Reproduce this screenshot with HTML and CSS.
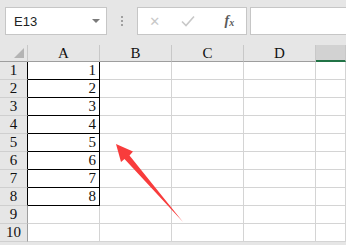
FILE: index.html
```html
<!DOCTYPE html>
<html lang="en">
<head>
    <meta charset="UTF-8">
    <title>Sheet</title>
    <link rel="stylesheet" href="styles.css">
</head>
<body>
    <div class="toolbar">
        <div class="name-box">
            <span>E13</span>
            <span class="caret"></span>
        </div>
        <div class="grip"><i></i><i></i><i></i></div>
        <div class="fx-buttons">
            <span class="btn cancel">&#x2715;</span>
            <span class="btn ok">
                <svg width="14" height="12" viewBox="0 0 14 12"><path d="M1 6.5 L5 10.5 L13 1.5" fill="none" stroke="#c8c8c8" stroke-width="1.6"/></svg>
            </span>
            <span class="btn fx">f<sub>x</sub></span>
        </div>
        <div class="formula"></div>
    </div>

    <div class="sheet">
        <table class="grid">
            <colgroup>
                <col class="c-head">
                <col class="c-col"><col class="c-col"><col class="c-col"><col class="c-col">
                <col class="c-last">
            </colgroup>
            <tr class="col-heads">
                <th class="corner"><span class="tri"></span></th>
                <th>A</th><th>B</th><th>C</th><th>D</th><th class="sel"></th>
            </tr>
            <tr><th class="rh boxed">1</th><td class="box">1</td><td></td><td></td><td></td><td></td></tr>
            <tr><th class="rh boxed">2</th><td class="box">2</td><td></td><td></td><td></td><td></td></tr>
            <tr><th class="rh boxed">3</th><td class="box">3</td><td></td><td></td><td></td><td></td></tr>
            <tr><th class="rh boxed">4</th><td class="box">4</td><td></td><td></td><td></td><td></td></tr>
            <tr><th class="rh boxed">5</th><td class="box">5</td><td></td><td></td><td></td><td></td></tr>
            <tr><th class="rh boxed">6</th><td class="box">6</td><td></td><td></td><td></td><td></td></tr>
            <tr><th class="rh boxed">7</th><td class="box">7</td><td></td><td></td><td></td><td></td></tr>
            <tr><th class="rh boxed">8</th><td class="box">8</td><td></td><td></td><td></td><td></td></tr>
            <tr><th class="rh">9</th><td></td><td></td><td></td><td></td><td></td></tr>
            <tr><th class="rh">10</th><td></td><td></td><td></td><td></td><td></td></tr>
        </table>

        <!-- annotation arrow drawn over the grid -->
        <svg class="arrow" width="346" height="245" viewBox="0 0 346 245">
            <polygon points="116,144 133,151.5 129.5,155.5 183,222 124.5,159 121,162" fill="#f83c3c"/>
        </svg>
    </div>
</body>
</html>
```

FILE: styles.css
```css
body {
    margin: 0;
    background-color: #e6e6e6;
    width: 346px;
    height: 245px;
    overflow: hidden;
    font-family: "Liberation Serif", serif;
}
.toolbar {
    display: flex;
    align-items: center;
    height: 45px;
    padding: 0 0 0 5px;
    box-sizing: border-box;
}
.name-box {
    height: 26px;
    margin-top: -3px;
    background: white;
    border: 1px solid #c6c6c6;
    display: flex;
    align-items: center;
    justify-content: space-between;
    padding: 0 6px 0 8px;
    width: 86px;
    font-family: "Liberation Sans", Arial, sans-serif;
    font-size: 13px;
    color: #222;
}
.caret {
    width: 0;
    height: 0;
    border-left: 4px solid transparent;
    border-right: 4px solid transparent;
    border-top: 4px solid #7a7a7a;
}
.grip {
    width: 30px;
    display: flex;
    flex-direction: column;
    align-items: center;
    gap: 2px;
    margin-top: -3px;
}
.grip i {
    width: 2px;
    height: 2px;
    background: #a0a0a0;
}
.fx-buttons {
    width: 108px;
    height: 26px;
    margin-top: -3px;
    background: white;
    border: 1px solid #c6c6c6;
    display: flex;
    align-items: center;
}
.btn {
    width: 36px;
    text-align: center;
    color: #c8c8c8;
    font-family: "DejaVu Sans", sans-serif;
    font-size: 13px;
}
.btn.ok svg {
    display: block;
    margin: 0 auto;
}
.btn.fx {
    font-family: "Liberation Serif", serif;
    font-style: italic;
    font-weight: bold;
    color: #5a5a5a;
    font-size: 14px;
    padding-left: 8px;
}
.btn.fx sub {
    font-size: 10px;
    vertical-align: -1px;
}
.formula {
    flex: 1;
    height: 26px;
    margin-top: -3px;
    margin-left: 3px;
    background: white;
    border: 1px solid #c6c6c6;
    border-right: none;
}
.sheet {
    position: relative;
    background: white;
}
.grid {
    border-collapse: separate;
    border-spacing: 0;
    table-layout: fixed;
    width: 346px;
    font-size: 15px;
    color: #111;
}
.c-head { width: 28px; }
.c-col { width: 72px; }
.c-last { width: 30px; }
.grid th,
.grid td {
    padding: 0 3px;
    border-right: 1px solid #d4d4d4;
    border-bottom: 1px solid #d4d4d4;
    overflow: hidden;
    white-space: nowrap;
    line-height: 17px;
}
.grid td {
    height: 17px;
    text-align: right;
}
.col-heads th {
    height: 16px;
    background: #e6e6e6;
    font-weight: normal;
    text-align: center;
    border-right-color: #c8c8c8;
    border-bottom: 1px solid #9e9e9e;
    line-height: 16px;
}
.col-heads th.sel {
    background: #d2d2d2;
    border-bottom: 2px solid #217346;
    height: 15px;
}
.corner {
    position: relative;
}
.tri {
    position: absolute;
    right: 3px;
    bottom: 3px;
    width: 0;
    height: 0;
    border-left: 10px solid transparent;
    border-bottom: 10px solid #b4b4b4;
}
.rh {
    background: #e6e6e6;
    font-weight: normal;
    text-align: center;
    border-right-color: #9e9e9e !important;
    border-bottom-color: #cfcfcf !important;
}
.rh.boxed {
    border-right-color: #000 !important;
}
.grid td.box {
    border-right-color: #000;
    border-bottom-color: #000;
}
.arrow {
    position: absolute;
    left: 0;
    top: -45px;
    pointer-events: none;
}
```
